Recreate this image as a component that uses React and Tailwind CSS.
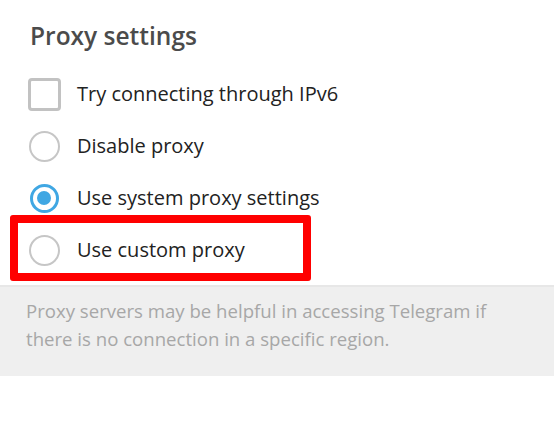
import { useState } from "react";

const options = [
  { id: "disable", label: "Disable proxy" },
  { id: "system", label: "Use system proxy settings" },
  { id: "custom", label: "Use custom proxy", highlight: true },
];

function Radio({ checked }) {
  if (checked) {
    return (
      <span className="flex h-[29px] w-[29px] items-center justify-center rounded-full border-[3px] border-[#40a7e3]">
        <span className="h-[14px] w-[14px] rounded-full bg-[#40a7e3]" />
      </span>
    );
  }
  return <span className="h-[31px] w-[31px] rounded-full border-2 border-[#c6c6c6]" />;
}

export default function App() {
  const [ipv6, setIpv6] = useState(false);
  const [mode, setMode] = useState("system");

  return (
    <div className="min-h-screen bg-white" style={{ fontFamily: '"Open Sans", "Liberation Sans", sans-serif' }}>
      <h1 className="pl-[30px] pt-[20px] text-[24.5px] font-semibold leading-[32px] text-[#4b4b4b]">Proxy settings</h1>

      <div className="mt-[16px]">
        {/* IPv6 checkbox */}
        <div className="flex h-[52px] cursor-pointer items-center pl-[27px]" onClick={() => setIpv6(!ipv6)}>
          <span className="flex w-[34px] justify-center">
            <span className="h-[33px] w-[33px] rounded-[4px] border-[3px] border-[#c2c2c2]" />
          </span>
          <span className="ml-[16px] text-[20px] text-[#222]">Try connecting through IPv6</span>
        </div>

        {options.map((opt) => (
          <div key={opt.id} className="relative flex h-[52px] cursor-pointer items-center pl-[27px]" onClick={() => setMode(opt.id)}>
            <span className="flex w-[34px] justify-center">
              <Radio checked={mode === opt.id} />
            </span>
            <span className="ml-[16px] text-[20px] text-[#222]">{opt.label}</span>
            {opt.highlight && (
              <div className="pointer-events-none absolute left-[10px] top-[-9px] h-[66px] w-[301px] rounded-[3px] border-[8px] border-[#ff0000]" />
            )}
          </div>
        ))}
      </div>

      <div className="mt-[9px] border-t-2 border-[#e7e7e7] bg-[#efefef] pb-[23px] pl-[26px] pr-[20px] pt-[10px]">
        <p className="text-[18.6px] leading-[28px] text-[#a7a7a7]">
          Proxy servers may be helpful in accessing Telegram if
          <br />
          there is no connection in a specific region.
        </p>
      </div>
    </div>
  );
}
